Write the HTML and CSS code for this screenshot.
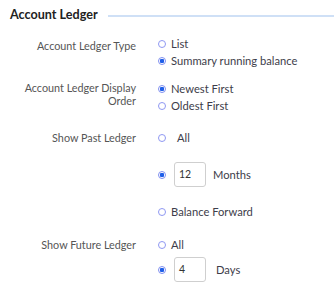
FILE: index.html
```html
<!DOCTYPE html>
<html>
<head>
<meta charset="utf-8">
<link rel="stylesheet" href="styles.css">
</head>
<body>
<div class="panel">
  <div class="legend"><span class="title">Account Ledger</span><span class="rule"></span></div>

  <div class="field f-type">
    <div class="label l-type">Account Ledger Type</div>
    <div class="opts">
      <label class="opt"><input type="radio" name="t"><span>List</span></label>
      <label class="opt"><input type="radio" name="t" checked><span>Summary running balance</span></label>
    </div>
  </div>

  <div class="field f-order">
    <div class="label l-order">Account Ledger Display<br>Order</div>
    <div class="opts">
      <label class="opt"><input type="radio" name="o" checked><span>Newest First</span></label>
      <label class="opt"><input type="radio" name="o"><span>Oldest First</span></label>
    </div>
  </div>

  <div class="field f-past">
    <div class="label">Show Past Ledger</div>
    <div class="opts">
      <label class="opt"><input type="radio" name="p"><span class="wide">All</span></label>
      <label class="opt box-row past-months"><input type="radio" name="p" checked><span class="num">12</span><span class="unit">Months</span></label>
      <label class="opt past-bf"><input type="radio" name="p"><span>Balance Forward</span></label>
    </div>
  </div>

  <div class="field f-future">
    <div class="label">Show Future Ledger</div>
    <div class="opts">
      <label class="opt"><input type="radio" name="f"><span>All</span></label>
      <label class="opt box-row fut-days"><input type="radio" name="f" checked><span class="num">4</span><span class="unit days">Days</span></label>
    </div>
  </div>
</div>
</body>
</html>
```

FILE: styles.css
```css
html, body {
  margin: 0;
  padding: 0;
  background: #ffffff;
}
body {
  font-family: Lato, "Noto Sans", sans-serif;
  font-size: 11.2px;
  color: #444;
  width: 334px;
  height: 290px;
  overflow: hidden;
}
.panel {
  padding: 0;
}
.legend {
  display: flex;
  align-items: center;
  height: 29px;
  padding-left: 10px;
}
.title {
  font-size: 12.6px;
  font-weight: bold;
  color: #222;
}
.rule {
  flex: 1;
  height: 2px;
  background: #cfe0f6;
  margin-left: 10px;
  margin-top: 2px;
}
.field {
  display: grid;
  grid-template-columns: 136px 1fr;
  column-gap: 22px;
}
.label {
  text-align: right;
  color: #555;
  line-height: 17px;
  font-size: 10.8px;
}
.l-type { padding-top: 4px; line-height: 13px; }
.l-order { padding-top: 1px; line-height: 13px; }
.f-type { margin-top: 6px; }
.f-order { margin-top: 11px; }
.f-past { margin-top: 15px; }
.f-future { margin-top: 16px; }
.opts {
  display: flex;
  flex-direction: column;
  align-items: flex-start;
}
.opt {
  display: flex;
  align-items: center;
  height: 17px;
  color: #3d3d4a;
  white-space: nowrap;
}
.opt input {
  appearance: none;
  -webkit-appearance: none;
  margin: 0 5px 0 0;
  width: 8px;
  height: 8px;
  border: 1px solid #8f98f2;
  border-radius: 50%;
  box-sizing: border-box;
  background: #fff;
  flex: none;
}
.opt input:checked {
  border-color: #7f8ff0;
  background: radial-gradient(circle, #1f5fe8 0 2px, #fff 2.5px);
}
.wide { margin-left: 6px; }
.box-row { height: 25px; }
.box-row input { margin-right: 8px; }
.num {
  width: 32px;
  height: 25px;
  box-sizing: border-box;
  border: 1px solid #cfcfcf;
  border-radius: 3px;
  padding-left: 4px;
  line-height: 23px;
  color: #333;
  font-size: 10.5px;
}
.unit { margin-left: 7px; }
.unit.days { margin-left: 10px; }
.past-months { margin-top: 16px; }
.past-bf { margin-top: 16px; }
.fut-days { margin-top: 4px; }
```
